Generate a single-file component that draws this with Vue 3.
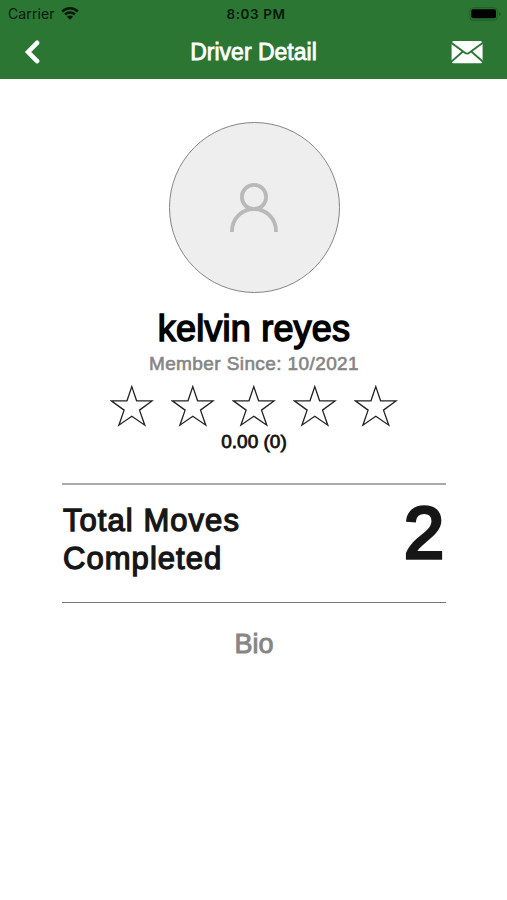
<script setup>
import { reactive } from "vue";

const driver = reactive({
  name: "kelvin reyes",
  memberSince: "10/2021",
  rating: 0,
  reviews: 0,
  moves: 2
});
</script>

<template>
  <div class="screen">
    <header class="header">
      <div class="status">
        <div class="carrier">
          <span>Carrier</span>
          <svg class="wifi" viewBox="0 0 18 13">
            <path d="M1.2 4.6a11 11 0 0 1 15.6 0M4.1 7.5a7 7 0 0 1 9.8 0" fill="none" stroke="#06180a" stroke-width="2.5" />
            <path d="M9 12.7 6 9.7a4.2 4.2 0 0 1 6 0z" fill="#06180a" />
          </svg>
        </div>
        <span class="time">8:03 PM</span>
        <svg class="battery" viewBox="0 0 33 14">
          <rect x="1" y="0.7" width="27.4" height="12.6" rx="3.4" fill="none" stroke="#1f5c28" />
          <rect x="2.3" y="2.3" width="24.7" height="9" rx="1.8" fill="#000" />
          <path d="M30.2 5v4q1.6-.6 1.6-2t-1.6-2z" fill="#1b5424" />
        </svg>
      </div>
      <nav class="nav">
        <button class="icon-button" type="button" aria-label="Back">
          <svg class="back" viewBox="0 0 16 24">
            <path d="M13.1 2.8 4.1 12l9 9.2" fill="none" stroke="#fff" stroke-width="4.6" stroke-linecap="round" stroke-linejoin="miter" />
          </svg>
        </button>
        <h1 class="title">Driver Detail</h1>
        <button class="icon-button" type="button" aria-label="Message">
          <svg class="mail" viewBox="0 0 32 24">
            <rect x="0.6" y="1" width="31" height="22.3" rx="2.6" fill="#fff" />
            <path d="M-.4 2.2 13.9 12.8q2.2 1.6 4.4 0L32.6 2.2M-.4 22.3l12-10.6M32.6 22.3 20.6 11.7" fill="none" stroke="#2b7633" stroke-width="1.9" />
          </svg>
        </button>
      </nav>
    </header>

    <main class="content">
      <div class="avatar">
        <svg class="person" viewBox="0 0 50 52">
          <circle cx="25" cy="15" r="12.1" />
          <path d="M3 50v-1a22 22 0 0 1 44 0v1" />
        </svg>
      </div>
      <h2 class="name">{{ driver.name }}</h2>
      <p class="member">Member Since: {{ driver.memberSince }}</p>
      <div class="stars">
        <svg v-for="star in 5" :key="star" class="star" viewBox="0 0 44 42">
          <path d="M21.8 1.6 26.6 15.8H42.3L29.5 25.1 34.8 40.2 21.8 31.2 8.9 40.2 14.1 25.1 1.3 15.8H17z" />
        </svg>
      </div>
      <p class="rating">{{ driver.rating.toFixed(2) }} ({{ driver.reviews }})</p>

      <section class="moves">
        <h3 class="moves-label">Total Moves Completed</h3>
        <span class="moves-count">{{ driver.moves }}</span>
      </section>

      <h3 class="bio">Bio</h3>
    </main>
  </div>
</template>

<style>
body {
  margin: 0;
  background: #fff;
}
</style>

<style scoped>
.screen {
  height: 900px;
  background: #fff;
  font-family: "Liberation Sans", Arial, sans-serif;
  overflow: hidden;
}

h1,
h2,
h3,
p {
  margin: 0;
  font-weight: 400;
}

.header {
  height: 79px;
  background: #2b7633;
}

.status {
  display: grid;
  grid-template-columns: 1fr auto 1fr;
  align-items: center;
  height: 27px;
  padding: 0 5px 0 8px;
  color: #06180a;
  font-family: Inter, sans-serif;
  font-size: 14px;
}

.carrier {
  display: flex;
  align-items: center;
  gap: 6px;
  letter-spacing: 0.1px;
}

.wifi {
  width: 18px;
  height: 13px;
}

.time {
  padding-left: 2px;
  font-size: 13.5px;
  font-weight: 600;
  letter-spacing: 0.6px;
}

.battery {
  justify-self: end;
  width: 33px;
  height: 14px;
}

.nav {
  display: flex;
  align-items: center;
  justify-content: space-between;
  height: 50px;
  padding: 0 24px;
}

.icon-button {
  display: flex;
  width: 32px;
  padding: 0;
  border: none;
  background: none;
}

.back {
  width: 16px;
  height: 24px;
}

.mail {
  width: 32px;
  height: 24px;
}

.title {
  color: #fff;
  font-size: 23px;
  -webkit-text-stroke: 0.8px #fff;
}

.content {
  display: flex;
  flex-direction: column;
  align-items: center;
  padding: 43px 61px 0 62px;
}

.avatar {
  display: flex;
  align-items: center;
  justify-content: center;
  box-sizing: border-box;
  width: 171px;
  height: 171px;
  border: 1px solid #858585;
  border-radius: 50%;
  background: #eee;
}

.person {
  width: 50px;
  height: 52px;
  fill: none;
  stroke: #b9b9b9;
  stroke-width: 3.8;
}

.name {
  margin-top: 15px;
  color: #000;
  font-size: 36px;
  line-height: 42px;
  letter-spacing: 0.2px;
  -webkit-text-stroke: 1.5px #000;
}

.member {
  margin-top: 3px;
  color: #858585;
  font-size: 19px;
  line-height: 22px;
  letter-spacing: 0.4px;
  -webkit-text-stroke: 0.6px #858585;
}

.stars {
  display: flex;
  gap: 17px;
  margin-top: 10px;
}

.star {
  width: 44px;
  height: 42px;
  fill: none;
  stroke: #222;
  stroke-width: 1.3;
}

.rating {
  margin-top: 4px;
  color: #111;
  font-size: 19px;
  line-height: 22px;
  -webkit-text-stroke: 0.8px #111;
}

.moves {
  display: flex;
  justify-content: space-between;
  box-sizing: border-box;
  width: 100%;
  height: 120px;
  margin-top: 30px;
  padding: 17px 2px 0 1px;
  border-top: 2px solid #aaa;
  border-bottom: 1px solid #777;
  color: #161616;
}

.moves-label {
  width: 200px;
  font-size: 31px;
  line-height: 38px;
  letter-spacing: 1.05px;
  -webkit-text-stroke: 1.3px #161616;
}

.moves-count {
  font-size: 72px;
  line-height: 62px;
  -webkit-text-stroke: 3.4px #161616;
}

.bio {
  margin-top: 24px;
  color: #858585;
  font-size: 27px;
  line-height: 34px;
  -webkit-text-stroke: 0.9px #858585;
}
</style>
